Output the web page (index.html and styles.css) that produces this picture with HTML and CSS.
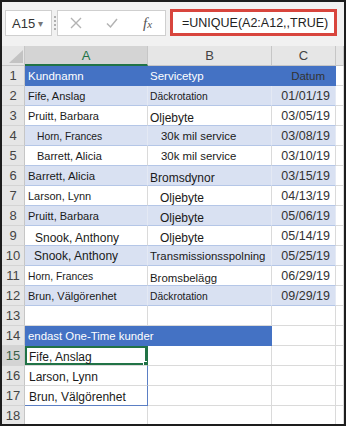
FILE: index.html
```html
<!doctype html>
<html lang="sv">
<head>
  <meta charset="UTF-8">
  <meta name="viewport" content="width=device-width, initial-scale=1.0">
  <title>UNIQUE</title>
  <link rel="stylesheet" href="styles.css">
</head>
<body>
  <div class="window">
    <div class="formula-bar">
      <div class="name-box"><span>A15</span><span class="caret">&#9662;</span></div>
      <div class="grip"><i></i><i></i><i></i><i></i></div>
      <div class="fn-box">
        <svg class="icon-x" width="12" height="12" viewBox="0 0 12 12"><path d="M1 1L11 11M11 1L1 11" stroke="#b3b3b3" stroke-width="1.4" fill="none"/></svg>
        <svg class="icon-ok" width="12" height="12" viewBox="0 0 12 12"><path d="M1 6.5L4.5 10L11 2" stroke="#b3b3b3" stroke-width="1.5" fill="none"/></svg>
        <span class="fx">f<small>x</small></span>
      </div>
      <div class="formula">=UNIQUE(A2:A12,,TRUE)</div>
    </div>

    <div class="sheet">
      <div class="corner"><svg width="14" height="13" viewBox="0 0 14 13"><path d="M14 0V13H0Z" fill="#c3c3c3"/></svg></div>
      <div class="ch sel">A</div><div class="ch">B</div><div class="ch">C</div><div class="ch"></div>

      <div class="rh">1</div>
      <div class="c head">Kundnamn</div><div class="c head b">Servicetyp</div><div class="c head date">Datum</div><div class="c"></div>

      <div class="rh">2</div>
      <div class="c band">Fife, Anslag</div><div class="c band b s10">Däckrotation</div><div class="c band date">01/01/19</div><div class="c"></div>

      <div class="rh">3</div>
      <div class="c t">Pruitt, Barbara</div><div class="c t b s12 low">Oljebyte</div><div class="c t date">03/05/19</div><div class="c"></div>

      <div class="rh">4</div>
      <div class="c band in1 s10">Horn, Frances</div><div class="c band b in1 s115">30k mil service</div><div class="c band date">03/08/19</div><div class="c"></div>

      <div class="rh">5</div>
      <div class="c t in1">Barrett, Alicia</div><div class="c t b in1 s115">30k mil service</div><div class="c t date">03/10/19</div><div class="c"></div>

      <div class="rh">6</div>
      <div class="c band s115">Barrett, Alicia</div><div class="c band b s12 low">Bromsdynor</div><div class="c band date">03/15/19</div><div class="c"></div>

      <div class="rh">7</div>
      <div class="c t">Larson, Lynn</div><div class="c t b in2 s12 low">Oljebyte</div><div class="c t date">04/13/19</div><div class="c"></div>

      <div class="rh">8</div>
      <div class="c band">Pruitt, Barbara</div><div class="c band b in2 s12 low">Oljebyte</div><div class="c band date">05/06/19</div><div class="c"></div>

      <div class="rh">9</div>
      <div class="c t in3 s12 low">Snook, Anthony</div><div class="c t b in2 s12 low">Oljebyte</div><div class="c t date">05/14/19</div><div class="c"></div>

      <div class="rh">10</div>
      <div class="c band in4 s12">Snook, Anthony</div><div class="c band b s115">Transmissionsspolning</div><div class="c band date">05/25/19</div><div class="c"></div>

      <div class="rh">11</div>
      <div class="c t s10">Horn, Frances</div><div class="c t b s115 low">Bromsbelägg</div><div class="c t date">06/29/19</div><div class="c"></div>

      <div class="rh">12</div>
      <div class="c band">Brun, Välgörenhet</div><div class="c band b s10">Däckrotation</div><div class="c band date">09/29/19</div><div class="c"></div>

      <div class="rh">13</div>
      <div class="c"></div><div class="c"></div><div class="c"></div><div class="c"></div>

      <div class="rh">14</div>
      <div class="c head wide s115">endast One-Time kunder</div><div class="c"></div><div class="c"></div>

      <div class="rh sel">15</div>
      <div class="c active s12">Fife, Anslag</div><div class="c"></div><div class="c"></div><div class="c"></div>

      <div class="rh">16</div>
      <div class="c spill s12">Larson, Lynn</div><div class="c"></div><div class="c"></div><div class="c"></div>

      <div class="rh">17</div>
      <div class="c spill last s12">Brun, Välgörenhet</div><div class="c"></div><div class="c"></div><div class="c"></div>

      <div class="rh">18</div>
      <div class="c"></div><div class="c"></div><div class="c"></div><div class="c"></div>
    </div>
  </div>
</body>
</html>
```

FILE: styles.css
```css
* {
    margin: 0;
    padding: 0;
    box-sizing: border-box;
}

body {
    font-family: "Liberation Sans", Arial, sans-serif;
    background: #fff;
}

.window {
    width: 346px;
    height: 426px;
    border: 2px solid #1d1d1d;
    overflow: hidden;
    background: #fff;
}

/* formula bar */
.formula-bar {
    height: 44px;
    background: #f1f1f1;
    display: flex;
    align-items: flex-start;
    padding: 7px 0 0 3px;
}

.name-box {
    width: 47px;
    height: 26px;
    margin-top: 1px;
    background: #fff;
    border: 1px solid #cfcfcf;
    display: flex;
    align-items: center;
    padding-left: 6px;
    font-size: 13px;
    color: #333;
}

.name-box .caret {
    font-size: 10px;
    color: #777;
    margin-left: 3px;
}

.grip {
    width: 5px;
    height: 26px;
    margin-top: 1px;
    display: flex;
    flex-direction: column;
    align-items: center;
    justify-content: center;
    gap: 2px;
}

.grip i {
    width: 2px;
    height: 2px;
    background: #b0b0b0;
}

.fn-box {
    width: 109px;
    height: 26px;
    margin-top: 1px;
    background: #fff;
    border: 1px solid #cfcfcf;
    display: flex;
    align-items: center;
    padding-left: 12px;
}

.icon-ok {
    margin-left: 24px;
}

.fx {
    margin-left: 25px;
    font-family: "Liberation Serif", serif;
    font-style: italic;
    font-size: 15px;
    color: #555;
}

.fx small {
    font-size: 11px;
}

.formula {
    width: 167px;
    height: 27px;
    margin-left: 4px;
    border: 3px solid #d8453d;
    background: #fff;
    display: flex;
    align-items: center;
    padding-left: 9px;
    font-size: 12.5px;
    color: #222;
}

/* sheet */
.sheet {
    display: grid;
    grid-template-columns: 23px 123px 124px 64px 8px;
    grid-auto-rows: 20px;
}

.corner {
    background: #e6e6e6;
    border-right: 1px solid #c6c6c6;
    border-bottom: 1px solid #c6c6c6;
    display: flex;
    align-items: flex-end;
    justify-content: flex-end;
    padding: 0 1px 2px 0;
}

.ch {
    background: #e6e6e6;
    border-right: 1px solid #c6c6c6;
    border-bottom: 1px solid #c6c6c6;
    text-align: center;
    font-size: 13px;
    line-height: 19px;
    color: #444;
}

.ch.sel {
    background: #d4d4d4;
    color: #217346;
    border-bottom: 2px solid #217346;
}

.rh {
    background: #e6e6e6;
    border-right: 1px solid #c6c6c6;
    border-bottom: 1px solid #d4d4d4;
    display: flex;
    align-items: center;
    justify-content: center;
    font-size: 13px;
    color: #444;
}

.rh.sel {
    background: #d4d4d4;
    color: #3a5f48;
}

.c {
    border-right: 1px solid #dadada;
    border-bottom: 1px solid #dadada;
    display: flex;
    align-items: center;
    padding: 1px 0 0 3px;
    font-size: 11px;
    color: #1a1a1a;
    white-space: nowrap;
    overflow: hidden;
}

.c.b {
    padding-left: 2px;
}

.head {
    background: #4472c4;
    border-color: #4472c4;
    color: #fff;
    font-size: 11.5px;
}

.band {
    background: #d9e1f2;
    border-right-color: #e4e9f4;
    border-bottom-color: #b4c6e7;
}

.t {
    border-bottom-color: #b4c6e7;
}

.date {
    justify-content: flex-end;
    padding-right: 5px;
    font-size: 12.5px;
    color: #333;
}

.head.date {
    font-size: 11.5px;
    padding-right: 10px;
}

.wide {
    grid-column: span 2;
}

.s10 { font-size: 10.3px; }
.s115 { font-size: 11.4px; }
.s12 { font-size: 12px; }
.low { padding-top: 4px; }

.in1 { padding-left: 12px; }
.c.b.in1 { padding-left: 13px; }
.c.b.in2 { padding-left: 12px; }
.in3 { padding-left: 10px; }
.in4 { padding-left: 9px; }

.active {
    position: relative;
    box-shadow: inset 0 0 0 2px #217346;
    border-right-color: #217346;
    padding-left: 4px;
    padding-top: 2px;
}

.active::after {
    content: "";
    position: absolute;
    right: -4px;
    bottom: -4px;
    width: 6px;
    height: 6px;
    background: #217346;
    border: 1px solid #fff;
}

.spill {
    border-right: 1px solid #5b7fc4;
    padding-left: 4px;
    padding-top: 3px;
}

.spill.last {
    border-bottom: 1px solid #5b7fc4;
}
```
